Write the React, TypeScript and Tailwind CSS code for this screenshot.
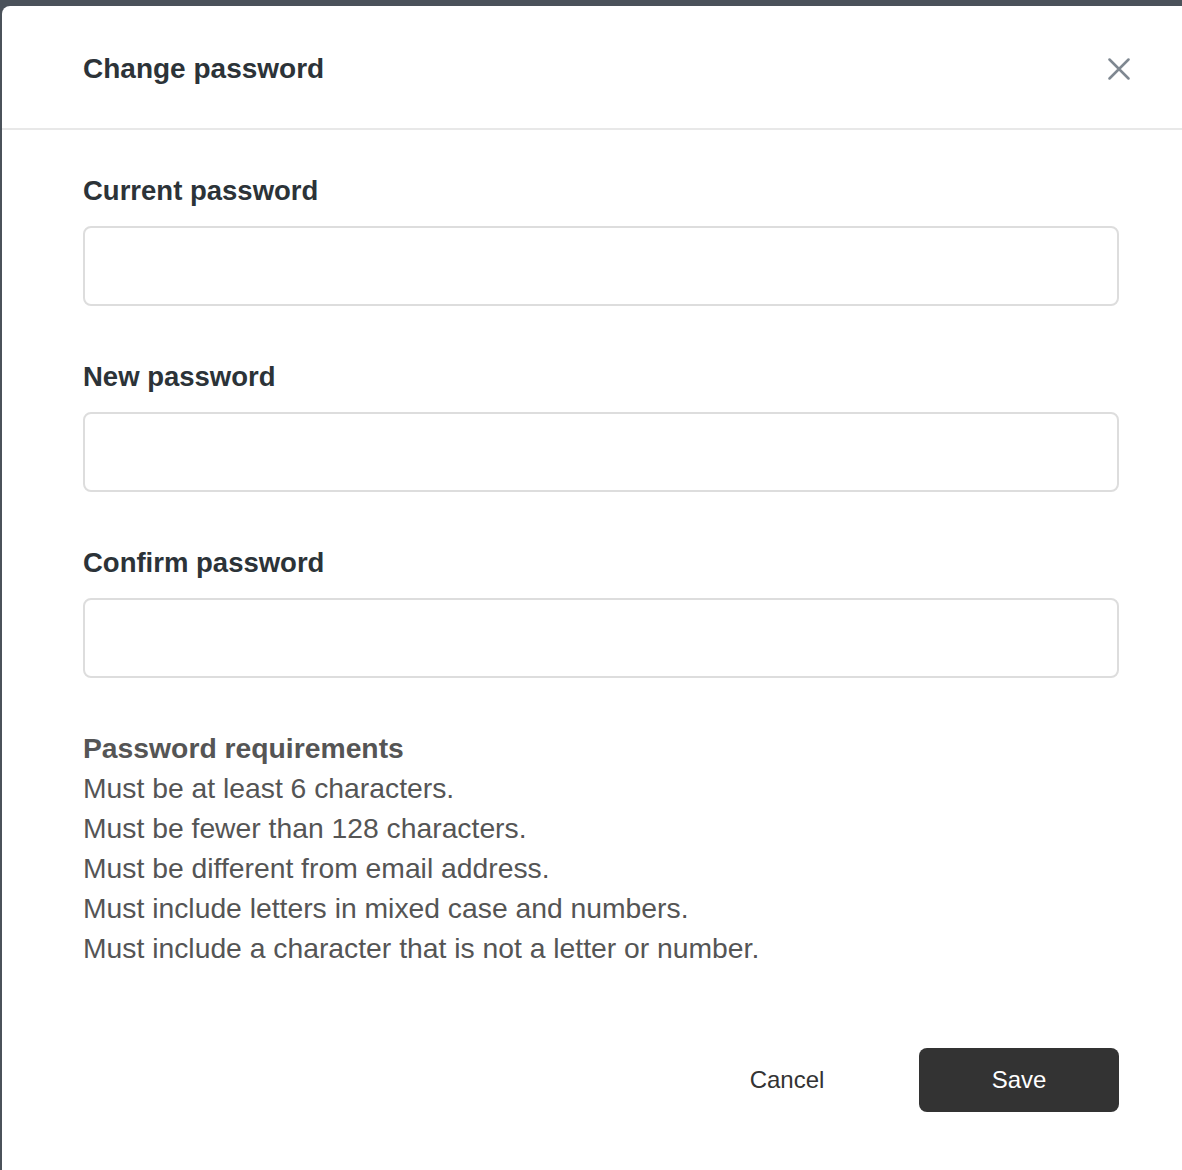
const fields = ['Current password', 'New password', 'Confirm password'];

const requirements = [
  'Must be at least 6 characters.',
  'Must be fewer than 128 characters.',
  'Must be different from email address.',
  'Must include letters in mixed case and numbers.',
  'Must include a character that is not a letter or number.',
];

export default function App() {
  return (
    <div
      className="h-[1170px] w-full overflow-hidden bg-[#4b525a] pt-[6px] pl-[2px]"
      style={{ fontFamily: '"Liberation Sans", Arial, sans-serif' }}
    >
      <div className="h-[1200px] w-[1198px] rounded-tl-[8px] bg-white">
        {/* header */}
        <div className="flex h-[124px] items-center justify-between border-b-2 border-[#e8e8e8] px-[81px] pt-[3px]">
          <h2 className="text-[28px] font-bold leading-[36px] text-[#2c3338]">Change password</h2>
          <button className="-mr-[11px] flex h-[22px] w-[22px] items-center justify-center text-[#7f8891]">
            <svg width="22" height="22" viewBox="0 0 22 22" fill="none" stroke="currentColor" strokeWidth="2.5" strokeLinecap="round">
              <path d="M1.5 1.5L20.5 20.5M20.5 1.5L1.5 20.5" />
            </svg>
          </button>
        </div>

        {/* body */}
        <div className="px-[81px] pt-[43px]">
          {fields.map((label, i) => (
            <div key={label} className={i > 0 ? 'mt-[53px]' : ''}>
              <label className="block text-[27.5px] font-bold leading-[36px] text-[#2c3338]">{label}</label>
              <input
                type="password"
                className="mt-[17px] block h-[80px] w-full rounded-[8px] border-2 border-[#dddddd] bg-white px-4 text-[24px] outline-none"
              />
            </div>
          ))}

          <div className="mt-[50px] text-[28.3px] leading-[40px] text-[#555555]">
            <div className="font-bold">Password requirements</div>
            {requirements.map((r) => (
              <div key={r}>{r}</div>
            ))}
          </div>

          <div className="mt-[80px] flex justify-end gap-[32px]">
            <button className="h-[64px] w-[200px] text-[24px] text-[#333333]">Cancel</button>
            <button className="h-[64px] w-[200px] rounded-[8px] bg-[#333333] text-[24px] text-white">Save</button>
          </div>
        </div>
      </div>
    </div>
  );
}
